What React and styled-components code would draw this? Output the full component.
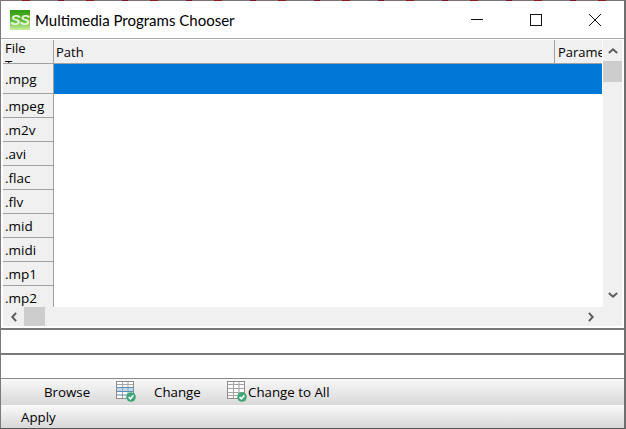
import React from 'react'
import styled, { createGlobalStyle } from 'styled-components'

const GlobalStyle = createGlobalStyle`
  html, body { margin: 0; padding: 0; background: #fff; }
  body { font-family: "Open Sans", "Noto Sans", "Liberation Sans", sans-serif; }
`

const extensions = ['.mpg', '.mpeg', '.m2v', '.avi', '.flac', '.flv', '.mid', '.midi', '.mp1', '.mp2']

function SsLogo() {
  return (
    <svg width="20" height="20" viewBox="0 0 20 20">
      <defs>
        <linearGradient id="ssBg" x1="0" y1="0" x2="0" y2="1">
          <stop offset="0" stopColor="#2f9a12" />
          <stop offset="0.5" stopColor="#5fb832" />
          <stop offset="1" stopColor="#c6f09a" />
        </linearGradient>
      </defs>
      <rect width="20" height="20" fill="url(#ssBg)" />
      <LogoText x="0.5" y="15">SS</LogoText>
    </svg>
  )
}

function Chevron({ dir }) {
  const paths = {
    up: 'M1 7 L6 2.5 L11 7',
    down: 'M1 2 L6 6.5 L11 2',
    left: 'M7 1 L2.5 6 L7 11',
    right: 'M2 1 L6.5 6 L2 11',
  }
  const wide = dir === 'up' || dir === 'down'
  return (
    <svg width={wide ? 10 : 8} height={wide ? 8 : 10} viewBox={wide ? '0 0 12 9' : '0 0 9 12'}>
      <path d={paths[dir]} fill="none" stroke="#5d5d5d" strokeWidth="2.4" />
    </svg>
  )
}

function TableIcon({ highlight }) {
  return (
    <svg width="20" height="21" viewBox="0 0 20 21">
      <rect x="0.5" y="0.5" width="17" height="17" fill="#fbfbfb" stroke="#8d8d8d" />
      {highlight && <rect x="1" y="6" width="16" height="5" fill="#bcd8ee" />}
      <path d="M1 3.5H17M6.5 1V17M12 1V17" fill="none" stroke="#a5a5a5" />
      {highlight
        ? <path d="M1 6.5H17M1 10.5H17M1 14H17" fill="none" stroke="#5f8fb4" />
        : <path d="M1 7.5H17M1 11.5H17M1 14.5H17" fill="none" stroke="#a5a5a5" />}
      <circle cx="15" cy="16" r="4.8" fill="#3fa678" />
      <path d="M12.6 16 L14.4 17.8 L17.4 14.4" fill="none" stroke="#fff" strokeWidth="1.6" />
    </svg>
  )
}

export default function App() {
  return (
    <>
      <GlobalStyle />
      <Window>
        <TopStrip />
        <TitleBar>
          <SsLogo />
          <Title>Multimedia Programs Chooser</Title>
          <WindowButtons>
            <WindowButton>
              <svg width="12" height="12" viewBox="0 0 12 12"><path d="M0 5.5H12" stroke="#111" /></svg>
            </WindowButton>
            <WindowButton>
              <svg width="12" height="12" viewBox="0 0 12 12"><rect x="0.5" y="0.5" width="11" height="11" fill="none" stroke="#111" /></svg>
            </WindowButton>
            <WindowButton>
              <svg width="12" height="12" viewBox="0 0 12 12"><path d="M0 0L12 12M12 0L0 12" stroke="#111" /></svg>
            </WindowButton>
          </WindowButtons>
        </TitleBar>
        <TableArea>
          <TableBody>
            <RowHeaders>
              <CornerCell>
                <span>File</span>
                <span>Type</span>
              </CornerCell>
              {extensions.map((ext, i) => (
                <RowHeader key={ext} $first={i === 0}>{ext}</RowHeader>
              ))}
            </RowHeaders>
            <Grid>
              <HeaderRow>
                <PathHeader>Path</PathHeader>
                <ParamHeader>Parameters</ParamHeader>
              </HeaderRow>
              <SelectedRow />
            </Grid>
            <VScroll>
              <ArrowBox><Chevron dir="up" /></ArrowBox>
              <VThumb />
              <VTrack />
              <ArrowBox $bottom><Chevron dir="down" /></ArrowBox>
            </VScroll>
          </TableBody>
          <HScroll>
            <HArrowBox><Chevron dir="left" /></HArrowBox>
            <HThumb />
            <HTrack />
            <HArrowBox $end><Chevron dir="right" /></HArrowBox>
          </HScroll>
        </TableArea>
        <TextField />
        <TextField />
        <ToolRow $h={27}>
          <ToolButton $w={115} $pad={43}>Browse</ToolButton>
          <IconSlot $w={24}><TableIcon highlight /></IconSlot>
          <ToolButton $w={87} $pad={14}>Change</ToolButton>
          <IconSlot $w={21}><TableIcon /></IconSlot>
          <ToolButton $w={100} $pad={0}>Change to All</ToolButton>
        </ToolRow>
        <ToolRow $h={23} $divider>
          <ToolButton $w={80} $pad={20}>Apply</ToolButton>
        </ToolRow>
      </Window>
    </>
  )
}

const LogoText = styled.text`
  font-family: "Liberation Sans", sans-serif;
  font-size: 15px;
  font-weight: 700;
  font-style: italic;
  letter-spacing: -0.6px;
  fill: #e6f5da;
`

const Window = styled.div`
  width: 626px;
  height: 429px;
  box-sizing: border-box;
  display: flex;
  flex-direction: column;
  background: #fff;
  border-left: 1px solid #7a7a7a;
  border-right: 2px solid #6f6f6f;
  border-bottom: 1px solid #555;
  color: #000;
  overflow: hidden;
`

const TopStrip = styled.div`
  height: 1px;
  margin: 0 -2px 0 -1px;
  flex: none;
  background: repeating-linear-gradient(90deg, #7d7070 0 22px, #8a1c22 22px 30px, #7a7478 30px 58px, #7a1a20 58px 64px);
`

const TitleBar = styled.div`
  height: 38px;
  flex: none;
  display: flex;
  align-items: center;
  padding-left: 9px;
  box-sizing: border-box;
  border-bottom: 1px solid #a8a8a8;
`

const Title = styled.div`
  margin-left: 5px;
  font-family: Lato, "Open Sans", sans-serif;
  font-size: 15px;
  color: #000;
  white-space: nowrap;
`

const WindowButtons = styled.div`
  margin-left: auto;
  display: flex;
`

const WindowButton = styled.div`
  width: 59px;
  height: 36px;
  display: flex;
  align-items: center;
  justify-content: center;
`

const TableArea = styled.div`
  height: 289px;
  flex: none;
  padding: 1px 2px 0 2px;
  box-sizing: border-box;
`

const TableBody = styled.div`
  height: 267px;
  display: flex;
  overflow: hidden;
`

const RowHeaders = styled.div`
  width: 51px;
  flex: none;
  display: flex;
  flex-direction: column;
  font-size: 13.5px;
`

const CornerCell = styled.div`
  height: 24px;
  flex: none;
  box-sizing: border-box;
  overflow: hidden;
  background: #f0f0f0;
  border-right: 1px solid #a0a0a0;
  border-bottom: 1px solid #a0a0a0;
  padding-left: 2px;
  font-size: 13px;
  line-height: 17px;
  span { display: block; }
`

const RowHeader = styled.div`
  height: ${p => (p.$first ? 30 : 24)}px;
  flex: none;
  box-sizing: border-box;
  background: #f0f0f0;
  border-right: 1px solid #a0a0a0;
  border-bottom: 1px solid #a0a0a0;
  padding-left: 2px;
  display: flex;
  align-items: center;
`

const Grid = styled.div`
  flex: 1;
  min-width: 0;
  display: flex;
  flex-direction: column;
`

const HeaderRow = styled.div`
  height: 24px;
  flex: none;
  display: flex;
  box-sizing: border-box;
  background: #f0f0f0;
  border-bottom: 1px solid #a0a0a0;
  font-size: 13px;
  overflow: hidden;
`

const PathHeader = styled.div`
  width: 501px;
  flex: none;
  box-sizing: border-box;
  padding-left: 2px;
  border-right: 1px solid #a0a0a0;
  display: flex;
  align-items: center;
`

const ParamHeader = styled.div`
  flex: none;
  padding-left: 3px;
  display: flex;
  align-items: center;
  white-space: nowrap;
`

const SelectedRow = styled.div`
  height: 30px;
  flex: none;
  background: #0078d7;
`

const VScroll = styled.div`
  width: 19px;
  margin-left: 1px;
  flex: none;
  display: flex;
  flex-direction: column;
  background: #f0f0f0;
`

const ArrowBox = styled.div`
  height: 21px;
  flex: none;
  box-sizing: border-box;
  padding-bottom: ${p => (p.$bottom ? 4 : 0)}px;
  display: flex;
  align-items: center;
  justify-content: center;
`

const VThumb = styled.div`
  height: 21px;
  flex: none;
  background: #cdcdcd;
`

const VTrack = styled.div`
  flex: 1;
`

const HScroll = styled.div`
  height: 19px;
  display: flex;
  background: #f0f0f0;
`

const HArrowBox = styled.div`
  width: 21px;
  margin-right: ${p => (p.$end ? 21 : 0)}px;
  flex: none;
  display: flex;
  align-items: center;
  justify-content: center;
`

const HThumb = styled.div`
  width: 21px;
  flex: none;
  background: #cdcdcd;
`

const HTrack = styled.div`
  flex: 1;
`

const TextField = styled.div`
  height: 25px;
  flex: none;
  box-sizing: border-box;
  border-top: 2px solid #7a7a7a;
  background: #fff;
`

const ToolRow = styled.div`
  height: ${p => p.$h}px;
  flex: none;
  box-sizing: border-box;
  display: flex;
  align-items: center;
  padding-bottom: 1px;
  border-top: 1px solid ${p => (p.$divider ? '#fafafa' : '#8a8a8a')};
  background: linear-gradient(180deg, #f8f8f8 0%, #d8d8d8 100%);
  font-size: 13.3px;
`

const ToolButton = styled.div`
  width: ${p => p.$w}px;
  flex: none;
  box-sizing: border-box;
  padding-left: ${p => p.$pad}px;
  white-space: nowrap;
`

const IconSlot = styled.div`
  width: ${p => p.$w}px;
  flex: none;
  display: flex;
  align-items: center;
`
